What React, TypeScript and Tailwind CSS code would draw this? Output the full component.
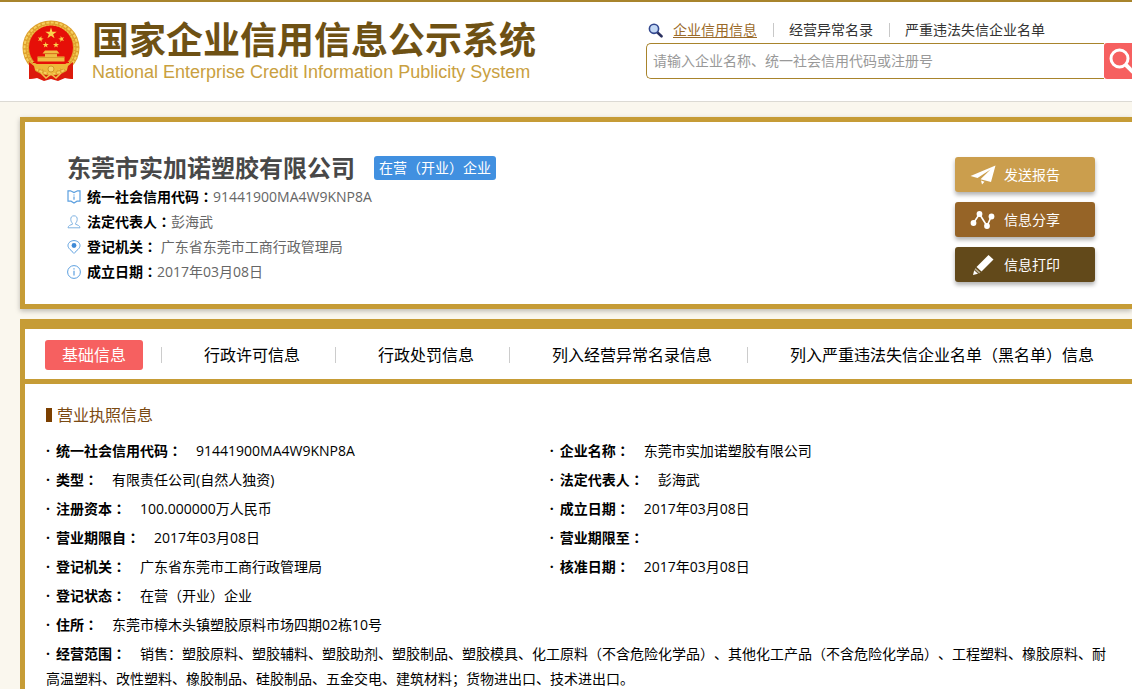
import React, { useState } from 'react';

interface Field {
  label: string;
  value: string;
  wide?: boolean;
}

const searchLinks = ['企业信用信息', '经营异常名录', '严重违法失信企业名单'];

const tabs = ['行政许可信息', '行政处罚信息', '列入经营异常名录信息', '列入严重违法失信企业名单（黑名单）信息'];

const fields: Field[] = [
  { label: '统一社会信用代码', value: '91441900MA4W9KNP8A' },
  { label: '企业名称', value: '东莞市实加诺塑胶有限公司' },
  { label: '类型', value: '有限责任公司(自然人独资)' },
  { label: '法定代表人', value: '彭海武' },
  { label: '注册资本', value: '100.000000万人民币' },
  { label: '成立日期', value: '2017年03月08日' },
  { label: '营业期限自', value: '2017年03月08日' },
  { label: '营业期限至', value: '' },
  { label: '登记机关', value: '广东省东莞市工商行政管理局' },
  { label: '核准日期', value: '2017年03月08日' },
  { label: '登记状态', value: '在营（开业）企业', wide: true },
  { label: '住所', value: '东莞市樟木头镇塑胶原料市场四期02栋10号', wide: true },
  {
    label: '经营范围',
    value:
      '销售：塑胶原料、塑胶辅料、塑胶助剂、塑胶制品、塑胶模具、化工原料（不含危险化学品）、其他化工产品（不含危险化学品）、工程塑料、橡胶原料、耐高温塑料、改性塑料、橡胶制品、硅胶制品、五金交电、建筑材料；货物进出口、技术进出口。',
    wide: true,
  },
];

// The TC face centres the full-width colon in its cell
const Colon = () => <span className="font-['Noto_Sans_CJK_TC',sans-serif]">：</span>;

const STAR = '0,-1 0.225,-0.309 0.951,-0.309 0.363,0.118 0.588,0.809 0,0.382 -0.588,0.809 -0.363,0.118 -0.951,-0.309 -0.225,-0.309';

const Emblem = () => (
  <svg viewBox="0 0 58 62" className="h-[62px] w-[58px] shrink-0" aria-label="国徽">
    <path d="M8 42 L7 59 L15 58 L22 61 L29 59 L36 61 L43 58 L51 59 L50 42 Z" fill="#dc1a0c" />
    <ellipse cx="29" cy="28" rx="28.5" ry="27.5" fill="#dd9f2c" />
    <ellipse cx="29" cy="28" rx="26.5" ry="25.5" fill="none" stroke="#f6cf5c" strokeWidth="2" strokeDasharray="3 1.5" />
    <ellipse cx="29" cy="28" rx="23.7" ry="22.7" fill="none" stroke="#efbe48" strokeWidth="1.5" strokeDasharray="2 1" />
    <circle cx="29" cy="27.5" r="22" fill="#e60f08" />
    <polygon points={STAR} transform="translate(29 13.5) scale(6)" fill="#fbd34c" />
    <polygon points={STAR} transform="translate(18.5 19) rotate(15) scale(3.2)" fill="#fbd34c" />
    <polygon points={STAR} transform="translate(39.5 19) rotate(-15) scale(3.2)" fill="#fbd34c" />
    <polygon points={STAR} transform="translate(23.7 25) scale(3.2)" fill="#fbd34c" />
    <polygon points={STAR} transform="translate(34 25) scale(3.2)" fill="#fbd34c" />
    <path d="M23 30.5 H35 L37.5 33.5 H20.5 Z M23 34 H35 V36.5 H42.5 V41.5 H15.5 V36.5 H23 Z" fill="#f0bb42" />
    <path d="M22 33.7 H36 M16 37.5 H42" stroke="#c98a20" strokeWidth="0.6" />
    <path d="M11 42.5 H47" stroke="#e60f08" strokeWidth="1.2" />
    <path d="M9 44 H49 L45 50 Q37 46 34 52 Q29 55 24 52 Q21 46 13 50 Z" fill="#eeb83a" />
    <circle cx="29" cy="49" r="3" fill="#f7d566" stroke="#c98a20" strokeWidth="0.8" />
    <path d="M7 42 L12 46 L15 58 L7 59 Z M51 42 L46 46 L43 58 L51 59 Z" fill="#dc1a0c" />
    <path d="M19 53 L24 58 L29 54 L34 58 L39 53" stroke="#f2c04a" strokeWidth="1.6" fill="none" />
  </svg>
);

const iconClass = 'h-[14px] w-[14px] shrink-0';

const BookIcon = () => (
  <svg viewBox="0 0 14 14" className={iconClass} fill="none" stroke="#5b9fdf" strokeWidth="1.2">
    <path d="M1 0.8 H3.5 L7 2.6 L10.5 0.8 H13 V11.2 H10 L7 13 L4 11.2 H1 Z" />
    <path d="M7 4.4 V5.6 M7 6.6 V9.8" />
  </svg>
);

const PersonIcon = () => (
  <svg viewBox="0 0 14 14" className={iconClass} fill="none" stroke="#7fb2e2">
    <path d="M7 0.8 C9.5 0.8 10.3 2.5 10.2 4.5 C10.1 6.5 9.2 7.5 8.6 8.2 V9.3 C10.5 10 12.8 10.5 13 12.8 H1 C1.2 10.5 3.5 10 5.4 9.3 V8.2 C4.8 7.5 3.9 6.5 3.8 4.5 C3.7 2.5 4.5 0.8 7 0.8 Z" />
  </svg>
);

const PinIcon = () => (
  <svg viewBox="0 0 14 14" className={iconClass} fill="none" stroke="#5b9fdf">
    <path d="M7 13.4 C4.5 10.5 1 8.5 1 5.6 C1 2.6 4 0.6 7 0.6 C10 0.6 13 2.6 13 5.6 C13 8.5 9.5 10.5 7 13.4 Z" />
    <circle cx="7" cy="5.5" r="2.4" fill="#3f8ad6" stroke="none" />
  </svg>
);

const InfoIcon = () => (
  <svg viewBox="0 0 14 14" className={iconClass} fill="none" stroke="#5b9fdf">
    <circle cx="7" cy="7" r="6.4" />
    <path d="M7 3.3 V4.6 M7 5.8 V10.6" strokeWidth="1.2" />
  </svg>
);

const SendIcon = () => (
  <svg viewBox="0 0 26 20" className="h-5 w-[26px]" fill="#fff">
    <path d="M25.5 0.5 L0.5 11 L7.5 13 L20.5 4.5 L10.5 14.2 L21 17 Z" />
    <path d="M11 15.5 L14.5 16.7 L12 19.5 Z" />
  </svg>
);

const ShareIcon = () => (
  <svg viewBox="0 0 26 20" className="h-5 w-[26px]" fill="#fff">
    <path d="M3.5 13 L9.5 4 L17 16 L21.5 6" fill="none" stroke="#fff" strokeWidth="1.6" />
    <circle cx="3.5" cy="13" r="2.9" />
    <circle cx="9.5" cy="4" r="2.9" />
    <circle cx="17" cy="16" r="2.9" />
    <circle cx="21.5" cy="6.5" r="2.9" />
  </svg>
);

const PencilIcon = () => (
  <svg viewBox="0 0 26 20" className="h-5 w-[26px]" fill="#fff">
    <path d="M18.5 0 L23.5 4.5 L11.5 16.5 L6.5 12 Z" />
    <path d="M5.5 13 L10.5 17.6 L9 18.6 L4.6 14.5 Z" fill="#b5a98e" />
    <path d="M4.2 15.2 L8 18.8 L3 20 Z" />
  </svg>
);

const SearchSmallIcon = () => (
  <svg viewBox="0 0 15 15" className="mr-[10px] h-[15px] w-[15px] shrink-0">
    <path d="M9.5 9.5 L13.5 13.3" stroke="#2b3160" strokeWidth="2.6" strokeLinecap="round" />
    <circle cx="6" cy="5.8" r="4.6" fill="#c3d8f5" stroke="#33488f" strokeWidth="1.6" />
  </svg>
);

const summary = [
  { icon: <BookIcon />, label: '统一社会信用代码', value: '91441900MA4W9KNP8A' },
  { icon: <PersonIcon />, label: '法定代表人', value: '彭海武' },
  { icon: <PinIcon />, label: '登记机关', value: '\u00a0广东省东莞市工商行政管理局' },
  { icon: <InfoIcon />, label: '成立日期', value: '2017年03月08日' },
];

const actionClass =
  'flex h-[35px] w-[140px] cursor-pointer items-center gap-2 rounded-[3px] pl-[15px] text-sm text-white shadow-[0_3px_4px_rgba(0,0,0,0.3)]';

export default function App() {
  const [keyword, setKeyword] = useState('');

  return (
    <div className="min-h-screen overflow-hidden bg-[#faf7ee] font-['Open_Sans','Noto_Sans_CJK_SC',sans-serif] text-sm text-black [text-spacing-trim:space-all]">
      <header className="flex h-[102px] items-start justify-between border-t-2 border-b border-t-[#a8842c] border-b-[#dcdad4] bg-white pl-[22px]">
        <div className="flex items-start gap-3 pt-[18px]">
          <Emblem />
          <div className="whitespace-nowrap">
            <h1 className="font-['Noto_Sans_CJK_SC',sans-serif] text-[37px] leading-9 font-bold text-[#6e5114]">
              国家企业信用信息公示系统
            </h1>
            <p className="font-['Liberation_Sans',sans-serif] text-lg leading-8 text-[#c9a040]">
              National Enterprise Credit Information Publicity System
            </p>
          </div>
        </div>

        <div className="w-[486px] shrink-0 pt-[18px]">
          <nav className="flex h-5 items-center pl-[2px] leading-5 whitespace-nowrap">
            <SearchSmallIcon />
            {searchLinks.map((text, i) => (
              <React.Fragment key={text}>
                {i > 0 && <span className="mr-[15px] ml-4 h-[14px] w-px bg-[#c8c8c8]" />}
                <a href="#" className={i === 0 ? 'text-[#9a6a2a] underline underline-offset-2' : 'text-[#333]'}>
                  {text}
                </a>
              </React.Fragment>
            ))}
          </nav>
          <form className="-mr-8 mt-[3px] flex h-9" onSubmit={(e) => e.preventDefault()}>
            <input
              type="text"
              aria-label="搜索企业"
              value={keyword}
              onChange={(e) => setKeyword(e.target.value)}
              placeholder="请输入企业名称、统一社会信用代码或注册号"
              className="min-w-0 flex-1 rounded-l-[5px] border border-r-0 border-[#a8842c] bg-white px-[6px] text-sm outline-none placeholder:text-[#999]"
            />
            <button type="submit" aria-label="搜索" className="w-[60px] cursor-pointer rounded-[3px] bg-[#f66060] pl-1">
              <svg viewBox="0 0 30 30" className="h-[30px] w-[30px]" fill="none" stroke="#fff">
                <circle cx="11.5" cy="12.5" r="8.5" strokeWidth="3" />
                <path d="M18 19 L26 27" strokeWidth="4" />
              </svg>
            </button>
          </form>
        </div>
      </header>

      <main className="pt-[15px] pl-5">
        <section className="flex h-[192px] items-start justify-between border-[5px] border-r-0 border-[#c69c36] bg-white pt-[30px] pr-[37px] pl-[42px] shadow-[0_2px_5px_rgba(0,0,0,0.25)]">
          <div>
            <div className="flex h-8 items-center gap-[19px]">
              <h2 className="text-2xl font-bold text-[#484848]">东莞市实加诺塑胶有限公司</h2>
              <span className="rounded-[3px] bg-[#4190e0] px-[5px] leading-6 text-white">在营（开业）企业</span>
            </div>
            <ul>
              {summary.map((item) => (
                <li key={item.label} className="flex h-[25px] items-center leading-[25px]">
                  {item.icon}
                  <span className="ml-[6px] font-bold">
                    {item.label}
                    <Colon />
                  </span>
                  <span className="text-[#666]">{item.value}</span>
                </li>
              ))}
            </ul>
          </div>

          <div className="flex flex-col gap-[10px] pt-[5px]">
            <button type="button" className={`${actionClass} bg-[#cb9e4d]`}>
              <SendIcon />
              发送报告
            </button>
            <button type="button" className={`${actionClass} bg-[#966427]`}>
              <ShareIcon />
              信息分享
            </button>
            <button type="button" className={`${actionClass} bg-[#62491a]`}>
              <PencilIcon />
              信息打印
            </button>
          </div>
        </section>

        <section className="mt-[10px] min-h-[380px] border-t-10 border-l-[5px] border-[#c69c36] bg-white">
          <nav className="flex h-[55px] items-center border-b-[5px] border-[#c69c36] pt-0.5 pl-5 text-base whitespace-nowrap">
            <button type="button" className="mr-[18px] h-[30px] cursor-pointer rounded-[3px] bg-[#f66060] px-[17px] text-white">
              基础信息
            </button>
            {tabs.map((tab) => (
              <button key={tab} type="button" className="flex cursor-pointer items-center pr-[35px]">
                <span className="mr-[42px] h-4 w-px bg-[#ccc]" />
                {tab}
              </button>
            ))}
          </nav>

          <div className="pt-[19px] pr-[14px] pl-[21px]">
            <h3 className="flex h-6 items-center gap-[5px] text-base text-[#7b4a12]">
              <span className="h-[14px] w-[6px] bg-[#7b3f00]" />
              营业执照信息
            </h3>
            <dl className="mt-[11px] grid grid-cols-[47%_53%] gap-y-1 leading-[25px]">
              {fields.map((field) => (
                <div key={field.label} className={field.wide ? 'col-span-2' : ''}>
                  <dt className="mr-[14px] inline font-bold">
                    <span className="inline-block w-[10px]">·</span>
                    {field.label}
                    <Colon />
                  </dt>
                  <dd className="inline">{field.value}</dd>
                </div>
              ))}
            </dl>
          </div>
        </section>
      </main>
    </div>
  );
}
